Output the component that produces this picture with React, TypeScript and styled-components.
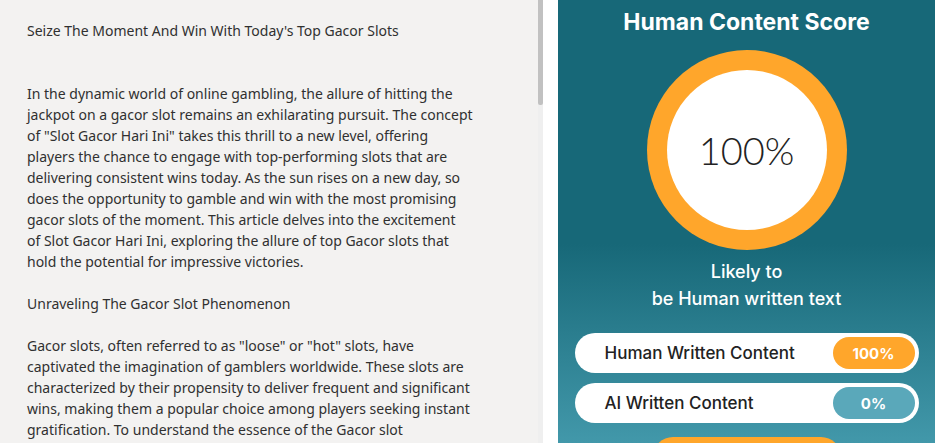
import styled, { createGlobalStyle } from "styled-components";

const GlobalStyle = createGlobalStyle`
  html, body {
    margin: 0;
    padding: 0;
    background: #ffffff;
    overflow: hidden;
  }
`;

// lines kept as in the editor, so the wrap matches
const paragraphs: string[][] = [
  ["Seize The Moment And Win With Today's Top Gacor Slots"],
  [],
  [
    "In the dynamic world of online gambling, the allure of hitting the",
    "jackpot on a gacor slot remains an exhilarating pursuit. The concept",
    'of "Slot Gacor Hari Ini" takes this thrill to a new level, offering',
    "players the chance to engage with top-performing slots that are",
    "delivering consistent wins today. As the sun rises on a new day, so",
    "does the opportunity to gamble and win with the most promising",
    "gacor slots of the moment. This article delves into the excitement",
    "of Slot Gacor Hari Ini, exploring the allure of top Gacor slots that",
    "hold the potential for impressive victories.",
  ],
  ["Unraveling The Gacor Slot Phenomenon"],
  [
    'Gacor slots, often referred to as "loose" or "hot" slots, have',
    "captivated the imagination of gamblers worldwide. These slots are",
    "characterized by their propensity to deliver frequent and significant",
    "wins, making them a popular choice among players seeking instant",
    "gratification. To understand the essence of the Gacor slot",
  ],
];

const scoreRows = [
  { label: "Human Written Content", value: "100%", tone: "human" as const },
  { label: "AI Written Content", value: "0%", tone: "ai" as const },
];

export default function App() {
  return (
    <>
      <GlobalStyle />
      <StyledPage>
        <StyledEditor>
          <StyledTextBody>
            {paragraphs.map((lines, i) => (
              <StyledParagraph key={i} empty={lines.length === 0}>
                {lines.join("\n")}
              </StyledParagraph>
            ))}
          </StyledTextBody>
        </StyledEditor>
        <StyledScrollTrack>
          <StyledScrollThumb />
        </StyledScrollTrack>
        <StyledScorePanel>
          <StyledTitle>Human Content Score</StyledTitle>
          <StyledRing>
            <StyledRingInner>100%</StyledRingInner>
          </StyledRing>
          <StyledVerdict>
            Likely to
            <br />
            be Human written text
          </StyledVerdict>
          <StyledRows>
            {scoreRows.map((row) => (
              <StyledRow key={row.label}>
                <StyledRowLabel>{row.label}</StyledRowLabel>
                <StyledBadge tone={row.tone}>{row.value}</StyledBadge>
              </StyledRow>
            ))}
          </StyledRows>
          <StyledActionButton aria-label="Check again" />
        </StyledScorePanel>
      </StyledPage>
    </>
  );
}

const StyledPage = styled.div`
  display: flex;
  width: 935px;
  height: 443px;
  overflow: hidden;
`;

const StyledEditor = styled.div`
  width: 538px;
  height: 443px;
  flex-shrink: 0;
  background: #f3f2f1;
  overflow: hidden;
`;

const StyledScrollTrack = styled.div`
  width: 5px;
  height: 443px;
  flex-shrink: 0;
  margin-right: 15px;
  background: #efefef;
  display: flex;
  flex-direction: column;
`;

const StyledScrollThumb = styled.div`
  height: 105px;
  background: #c1c1c1;
  border-radius: 0 0 2px 2px;
`;

const StyledTextBody = styled.div`
  padding: 20px 20px 0 27px;
  font-family: "Noto Sans", "Open Sans", sans-serif;
  font-size: 14px;
  line-height: 21px;
  color: #303030;
`;

const StyledParagraph = styled.p<{ empty?: boolean }>`
  margin: ${({ empty }) => (empty ? "0" : "0 0 21px")};
  min-height: 21px;
  white-space: pre-line;
`;

const StyledScorePanel = styled.section`
  width: 377px;
  flex-shrink: 0;
  height: 443px;
  background: linear-gradient(180deg, #176878 0%, #176878 55%, #4298aa 100%);
  display: flex;
  flex-direction: column;
  align-items: center;
  box-sizing: border-box;
  padding-top: 8px;
  font-family: "Inter", "Lato", sans-serif;
  overflow: hidden;
`;

const StyledTitle = styled.h1`
  margin: 0;
  font-size: 23px;
  line-height: 28px;
  font-weight: 700;
  color: #ffffff;
`;

const StyledRing = styled.div`
  margin-top: 14px;
  width: 200px;
  height: 200px;
  flex-shrink: 0;
  border-radius: 50%;
  background: #ffa62b;
  display: flex;
  align-items: center;
  justify-content: center;
`;

const StyledRingInner = styled.div`
  width: 160px;
  height: 160px;
  border-radius: 50%;
  background: #ffffff;
  display: flex;
  align-items: center;
  justify-content: center;
  font-family: "Lato", sans-serif;
  font-weight: 300;
  font-size: 38px;
  color: #222222;
`;

const StyledVerdict = styled.div`
  margin-top: 8px;
  flex-shrink: 0;
  text-align: center;
  color: #ffffff;
  font-size: 18px;
  line-height: 27px;
  font-weight: 500;
`;

const StyledRows = styled.div`
  margin-top: 21px;
  width: 344px;
  flex-shrink: 0;
  display: flex;
  flex-direction: column;
  gap: 10px;
`;

const StyledRow = styled.div`
  height: 40px;
  border-radius: 20px;
  background: #ffffff;
  display: flex;
  align-items: center;
  justify-content: space-between;
  padding: 0 4px 0 30px;
  box-sizing: border-box;
`;

const StyledRowLabel = styled.span`
  font-size: 17px;
  font-weight: 500;
  color: #222222;
`;

const StyledBadge = styled.span<{ tone: "human" | "ai" }>`
  width: 82px;
  height: 32px;
  border-radius: 16px;
  background: ${({ tone }) => (tone === "human" ? "#ffa62b" : "#5aa8ba")};
  color: #ffffff;
  font-weight: 700;
  font-size: 15px;
  display: flex;
  align-items: center;
  justify-content: center;
`;

const StyledActionButton = styled.button`
  margin-top: 14px;
  width: 188px;
  height: 40px;
  flex-shrink: 0;
  border: none;
  border-radius: 20px;
  background: #ffa62b;
`;
